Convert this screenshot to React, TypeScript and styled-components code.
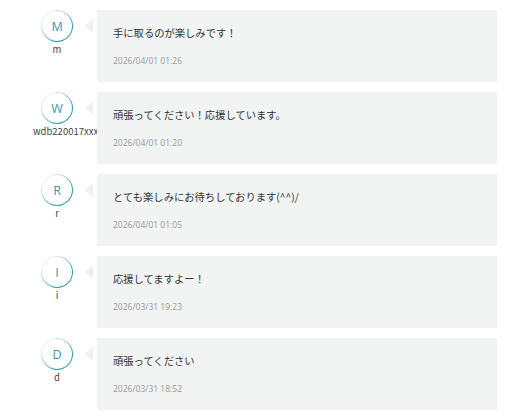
import React from "react";
import styled, { createGlobalStyle } from "styled-components";

const GlobalStyle = createGlobalStyle`
  body {
    margin: 0;
    background: #ffffff;
    font-family: "Noto Sans CJK JP", "Noto Sans", sans-serif;
  }
`;

const SList = styled.div`
  display: flex;
  flex-direction: column;
  gap: 10px;
  padding: 10px 14px 10px 33px;
`;

const SRow = styled.div`
  display: flex;
  align-items: flex-start;
`;

const SUser = styled.div`
  width: 48px;
  flex-shrink: 0;
  margin-right: 16px;
  display: flex;
  flex-direction: column;
  align-items: center;
`;

const SAvatar = styled.div`
  width: 32px;
  height: 32px;
  box-sizing: border-box;
  border-radius: 50%;
  border: 1px solid transparent;
  background: linear-gradient(#fff, #fff) padding-box,
    linear-gradient(135deg, #e6f3f5 20%, #2b9ea9 75%) border-box;
  display: flex;
  align-items: center;
  justify-content: center;
  color: #3b98b2;
  font-family: "Open Sans", "Noto Sans", sans-serif;
  font-size: 12.5px;
`;

const SName = styled.div`
  width: 100%;
  margin-top: 1px;
  font-size: 9.5px;
  line-height: 12px;
  color: #444;
  text-align: center;
  white-space: nowrap;
`;

const SBubble = styled.div`
  position: relative;
  flex: 1;
  height: 72px;
  box-sizing: border-box;
  background: #f2f3f3;
  padding: 16px 16px 15px;
  &::before {
    content: "";
    position: absolute;
    left: -12px;
    top: 9px;
    border-style: solid;
    border-width: 7px 8px 7px 0;
    border-color: transparent #eff0f0 transparent transparent;
  }
`;

const SText = styled.div`
  font-size: 10.3px;
  line-height: 14px;
  color: #333;
`;

const SDate = styled.div`
  margin-top: 15px;
  font-family: "Open Sans", "Noto Sans", sans-serif;
  font-size: 8.5px;
  line-height: 12px;
  color: #999;
`;

const comments = [
  { initial: "M", name: "m", text: "手に取るのが楽しみです！", date: "2026/04/01 01:26" },
  { initial: "W", name: "wdb220017xxxx", text: "頑張ってください！応援しています。", date: "2026/04/01 01:20" },
  { initial: "R", name: "r", text: "とても楽しみにお待ちしております(^^)/", date: "2026/04/01 01:05" },
  { initial: "I", name: "i", text: "応援してますよー！", date: "2026/03/31 19:23" },
  { initial: "D", name: "d", text: "頑張ってください", date: "2026/03/31 18:52" },
];

export default function App() {
  return (
    <>
      <GlobalStyle />
      <SList>
        {comments.map((c) => (
          <SRow key={c.date}>
            <SUser>
              <SAvatar>{c.initial}</SAvatar>
              <SName>{c.name}</SName>
            </SUser>
            <SBubble>
              <SText>{c.text}</SText>
              <SDate>{c.date}</SDate>
            </SBubble>
          </SRow>
        ))}
      </SList>
    </>
  );
}
